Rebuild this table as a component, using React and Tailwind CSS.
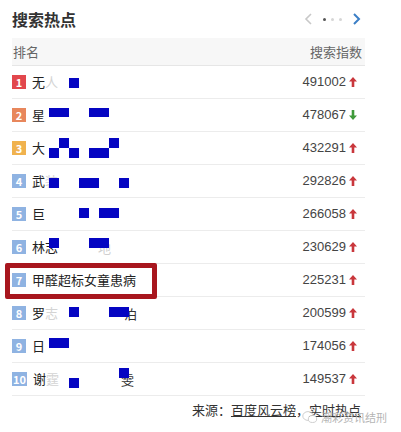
import React from "react";

const rows = [
  { n: 1, text: "无", faded: "人", num: "491002", up: true, blocks: [[69, 12, 10, 10]] },
  { n: 2, text: "星", num: "478067", up: false, blocks: [[49, 9, 20, 9], [89, 9, 20, 9]] },
  { n: 3, text: "大", num: "432291", up: true, blocks: [[59, 6, 10, 10], [49, 16, 10, 10], [69, 16, 10, 10], [89, 16, 20, 10], [109, 6, 10, 10]] },
  { n: 4, text: "武", faded: "装", num: "292826", up: true, blocks: [[49, 13, 10, 10], [79, 13, 20, 10], [119, 13, 10, 10]] },
  { n: 5, text: "巨", num: "266058", up: true, blocks: [[79, 10, 10, 10], [99, 10, 20, 10]] },
  { n: 6, text: "林志", tail: "地", tailX: 98, tailFaded: true, num: "230629", up: true, blocks: [[49, 7, 10, 10], [89, 7, 20, 10]] },
  { n: 7, text: "甲醛超标女童患病", num: "225231", up: true, blocks: [] },
  { n: 8, text: "罗", faded: "志", tail: "泊", tailX: 124, num: "200599", up: true, blocks: [[69, 10, 10, 10], [109, 10, 20, 10]] },
  { n: 9, text: "日", num: "174056", up: true, blocks: [[49, 8, 20, 10]] },
  { n: 10, text: "谢", faded: "霆", tail: "雯", tailX: 121, num: "149537", up: true, blocks: [[69, 15, 10, 10], [119, 5, 10, 10]] },
];

function badgeColor(n) {
  if (n === 1) return "bg-[#e2474d]";
  if (n === 2) return "bg-[#e8875c]";
  if (n === 3) return "bg-[#f0b24e]";
  return "bg-[#8fb3e2]";
}

function Arrow({ up }) {
  return (
    <svg width="8" height="10" viewBox="0 0 8 10" className="ml-[3px]">
      {up ? (
        <path d="M4 0 L8 4.5 L5.3 4.5 L5.3 10 L2.7 10 L2.7 4.5 L0 4.5 Z" fill="#c9373c" />
      ) : (
        <path d="M4 10 L8 5.5 L5.3 5.5 L5.3 0 L2.7 0 L2.7 5.5 L0 5.5 Z" fill="#3f9a3a" />
      )}
    </svg>
  );
}

function Row({ r }) {
  return (
    <div className="relative flex h-[33px] items-center border-b border-[#ececec]">
      <span className={`${badgeColor(r.n)} flex h-[14px] min-w-[14px] items-center justify-center px-[1px] text-[11px] font-bold leading-none text-white`}>
        {r.n}
      </span>
      <span className="ml-[6px] text-[13px] text-[#222]">
        {r.text}
        {r.faded && <span className="text-[#d4d4d4]">{r.faded}</span>}
      </span>
      {r.tail && (
        <span
          className={`absolute top-[7px] text-[13px] ${r.tailFaded ? "text-[#cfcfcf]" : "text-[#333]"}`}
          style={{ left: r.tailX - 12 }}
        >
          {r.tail}
        </span>
      )}
      {r.blocks.map((b, i) => (
        <span
          key={i}
          className="absolute bg-[#0505c2]"
          style={{ left: b[0] - 12, top: b[1], width: b[2], height: b[3] }}
        />
      ))}
      <span className="ml-auto flex items-center pr-[8px] font-['Liberation_Sans',sans-serif] text-[13px] text-[#444]">
        {r.num}
        <Arrow up={r.up} />
      </span>
    </div>
  );
}

export default function App() {
  return (
    <div className="relative h-[432px] w-[401px] overflow-hidden bg-white font-['Noto_Sans_CJK_SC',sans-serif]">
      <div className="ml-[12px] w-[353px]">
        {/* title */}
        <div className="flex h-[38px] items-center justify-between">
          <span className="text-[16px] font-bold text-[#333]">搜索热点</span>
          <div className="flex items-center gap-[5px] pr-[4px]">
            <svg width="8" height="12" viewBox="0 0 8 12">
              <path d="M7 1 L2 6 L7 11" fill="none" stroke="#c8c8c8" strokeWidth="1.6" />
            </svg>
            <span className="ml-[6px] h-[3px] w-[3px] rounded-full bg-[#555]" />
            <span className="h-[3px] w-[3px] rounded-full bg-[#d6d6d6]" />
            <span className="h-[3px] w-[3px] rounded-full bg-[#d6d6d6]" />
            <svg width="8" height="12" viewBox="0 0 8 12" className="ml-[6px]">
              <path d="M1 1 L6 6 L1 11" fill="none" stroke="#3b7fc6" strokeWidth="2" />
            </svg>
          </div>
        </div>

        {/* header */}
        <div className="flex h-[28px] items-center justify-between border-b border-[#e6e6e6] bg-[#f7f7f7] text-[13px] text-[#666]">
          <span className="pl-[1px]">排名</span>
          <span className="pr-[3px]">搜索指数</span>
        </div>

        {rows.map((r) => (
          <Row key={r.n} r={r} />
        ))}

        {/* footer */}
        <div className="flex h-[28px] items-center justify-end pr-[4px] text-[13px] text-[#333]">
          <span>来源：</span>
          <span className="underline">百度风云榜</span>
          <span>，</span>
          <span className="underline">实时热点</span>
        </div>
      </div>

      {/* red hand drawn box around row 7 */}
      <div className="absolute left-[5px] top-[263px] h-[36px] w-[152px] rounded-[2px] border-[5px] border-[#a8161e]" />

      {/* watermark */}
      <div className="absolute left-[302px] top-[409px] flex items-center gap-[3px] text-[11px] text-[#b5b5b5]">
        <svg width="16" height="14" viewBox="0 0 16 14">
          <ellipse cx="6" cy="6" rx="5.2" ry="4.4" fill="none" stroke="#c8c8c8" strokeWidth="0.9" />
          <ellipse cx="10.5" cy="9" rx="4.2" ry="3.5" fill="white" stroke="#c8c8c8" strokeWidth="0.9" />
        </svg>
        <span>潮彩资讯结刑</span>
      </div>
    </div>
  );
}
